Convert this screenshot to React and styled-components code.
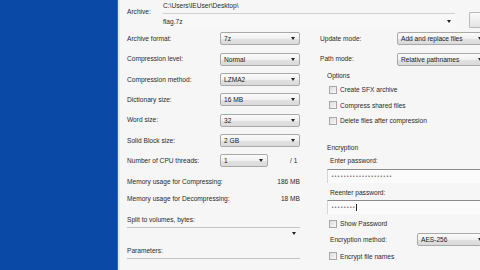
import React from "react";
import styled, { createGlobalStyle } from "styled-components";

const Global = createGlobalStyle`
  html, body { margin: 0; padding: 0; }
  body { width: 480px; height: 270px; overflow: hidden; background: #f6f6f6;
    font-family: "Liberation Sans", Arial, sans-serif; }
`;

const Screen = styled.div`
  display: flex;
  width: 480px;
  height: 270px;
  overflow: hidden;
`;

const BluePanel = styled.div`
  width: 117px;
  flex: none;
  background: #0b49a7;
  border-right: 1px solid #2f63b5;
`;

const Strip = styled.div`
  width: 2px;
  flex: none;
  background: #e4ebf4;
`;

const Dialog = styled.div`
  flex: 1;
  min-width: 0;
  background: #f6f6f6;
  padding-left: 7px;
  font-size: 6.6px;
  color: #2a2a2a;
  display: flex;
  flex-direction: column;
  overflow: hidden;
`;

const ArchiveRow = styled.div`
  height: 30px;
  display: grid;
  grid-template-columns: 36px 1fr;
`;

const Label = styled.div`
  white-space: nowrap;
  line-height: ${p => p.$h || 14}px;
  height: ${p => p.$h || 14}px;
  padding-left: ${p => p.$indent || 0}px;
`;

const PathBlock = styled.div`
  display: flex;
  flex-direction: column;
`;

const PathText = styled.div`
  height: 12px;
  line-height: 12px;
  white-space: nowrap;
`;

const ComboRow = styled.div`
  display: flex;
  align-items: stretch;
  gap: 14px;
  height: 15px;
  margin-top: 1px;
`;

const ComboField = styled.div`
  flex: 1;
  display: flex;
  align-items: center;
  justify-content: space-between;
  border-top: 1px solid #d0d0d0;
  padding: 0 4px 0 0;
  background: #f8f8f8;
`;

const SmallButton = styled.div`
  width: 10px;
  flex: none;
  border: 1px solid #b8b8b8;
  border-right: none;
  border-radius: 2px 0 0 2px;
  background: linear-gradient(#fafafa, #e4e4e4);
  margin-top: -1px;
`;

const Columns = styled.div`
  display: grid;
  grid-template-columns: 173px 1fr;
  column-gap: 20px;
`;

const Column = styled.div`
  display: flex;
  flex-direction: column;
  min-width: 0;
`;

const FormRow = styled.div`
  display: grid;
  grid-template-columns: ${p => p.$label}px ${p => p.$field}px auto;
  align-items: center;
  height: ${p => p.$h || 20.33}px;
`;

const SelectBox = styled.div`
  height: 13px;
  box-sizing: border-box;
  border: 1px solid #a9a9a9;
  border-radius: 2px;
  background: linear-gradient(#fbfbfb 0%, #f1f1f1 50%, #e2e2e2 51%, #dadada 100%);
  display: flex;
  align-items: center;
  justify-content: space-between;
  padding: 0 4px 0 3px;
  white-space: nowrap;
  overflow: hidden;
  color: #1a1a1a;
`;

const Arrow = styled.span`
  width: 0;
  height: 0;
  flex: none;
  border-left: 2.5px solid transparent;
  border-right: 2.5px solid transparent;
  border-top: 3px solid #222;
`;

const Suffix = styled.div`
  padding-left: 22px;
  white-space: nowrap;
`;

const MemRow = styled.div`
  display: flex;
  justify-content: space-between;
  align-items: center;
  height: 17px;
  width: 173px;
  white-space: nowrap;
`;

const LineField = styled.div`
  width: 173px;
  height: 12px;
  border-top: 1px solid #c4c4c4;
  display: flex;
  align-items: center;
  justify-content: flex-end;
  padding-right: 4px;
  box-sizing: border-box;
`;

const Legend = styled.div`
  padding-left: 7px;
  height: 10px;
  line-height: 10px;
  white-space: nowrap;
`;

const CheckRow = styled.div`
  display: flex;
  align-items: center;
  gap: 3px;
  height: ${p => p.$h || 15.5}px;
  padding-left: ${p => p.$indent || 9}px;
  white-space: nowrap;
`;

const Box = styled.span`
  width: 8px;
  height: 8px;
  flex: none;
  box-sizing: border-box;
  border: 1px solid #a8a8a8;
  background: linear-gradient(135deg, #dcdcdc, #f8f8f8);
`;

const PasswordField = styled.div`
  height: 14px;
  margin-left: 7px;
  box-sizing: border-box;
  border-top: 1px solid #8c8c8c;
  border-left: 1px solid #d6d6d6;
  background: #fbfbfb;
  display: flex;
  align-items: center;
  padding-left: 3px;
  font-family: "DejaVu Sans", sans-serif;
  font-size: 5px;
  letter-spacing: 0.1px;
  color: #555;
  white-space: nowrap;
`;

const Caret = styled.span`
  display: inline-block;
  width: 1px;
  height: 7px;
  background: #222;
  margin-left: 1px;
`;

const Spacer = styled.div`
  height: ${p => p.$h}px;
  flex: none;
`;

const leftRows = [
  ["Archive format:", "7z"],
  ["Compression level:", "Normal"],
  ["Compression method:", "LZMA2"],
  ["Dictionary size:", "16 MB"],
  ["Word size:", "32"],
  ["Solid Block size:", "2 GB"],
];

function Select({ value }) {
  return (
    <SelectBox>
      <span>{value}</span>
      <Arrow />
    </SelectBox>
  );
}

function Check({ label, h, indent }) {
  return (
    <CheckRow $h={h} $indent={indent}>
      <Box />
      <span>{label}</span>
    </CheckRow>
  );
}

export default function App() {
  return (
    <>
      <Global />
      <Screen>
        <BluePanel />
        <Strip />
        <Dialog>
          <ArchiveRow>
            <Label $h={24}>Archive:</Label>
            <PathBlock>
              <PathText>C:\Users\IEUser\Desktop\</PathText>
              <ComboRow>
                <ComboField>
                  <span>flag.7z</span>
                  <Arrow />
                </ComboField>
                <SmallButton />
              </ComboRow>
            </PathBlock>
          </ArchiveRow>
          <Columns>
            <Column>
              {leftRows.map(([l, v]) => (
                <FormRow key={l} $label={93} $field={80}>
                  <Label>{l}</Label>
                  <Select value={v} />
                </FormRow>
              ))}
              <FormRow $label={93} $field={48}>
                <Label>Number of CPU threads:</Label>
                <Select value="1" />
                <Suffix>/ 1</Suffix>
              </FormRow>
              <Spacer $h={2} />
              <MemRow>
                <span>Memory usage for Compressing:</span>
                <span>186 MB</span>
              </MemRow>
              <MemRow>
                <span>Memory usage for Decompressing:</span>
                <span>18 MB</span>
              </MemRow>
              <Spacer $h={6} />
              <Label>Split to volumes, bytes:</Label>
              <LineField>
                <Arrow />
              </LineField>
              <Spacer $h={5} />
              <Label>Parameters:</Label>
              <LineField />
            </Column>
            <Column>
              <FormRow $label={77} $field={90}>
                <Label>Update mode:</Label>
                <Select value="Add and replace files" />
              </FormRow>
              <FormRow $label={77} $field={90} $h={20}>
                <Label>Path mode:</Label>
                <Select value="Relative pathnames" />
              </FormRow>
              <Spacer $h={2} />
              <Legend>Options</Legend>
              <Spacer $h={1} />
              <Check label="Create SFX archive" />
              <Check label="Compress shared files" />
              <Check label="Delete files after compression" />
              <Spacer $h={14} />
              <Legend>Encryption</Legend>
              <Label $indent={10} $h={16}>Enter password:</Label>
              <PasswordField>••••••••••••••••••••</PasswordField>
              <Spacer $h={3} />
              <Label $indent={10} $h={14}>Reenter password:</Label>
              <PasswordField>
                ••••••••
                <Caret />
              </PasswordField>
              <Spacer $h={2} />
              <Check label="Show Password" h={16} />
              <FormRow $label={97} $field={70} $h={16}>
                <Label $indent={10}>Encryption method:</Label>
                <Select value="AES-256" />
              </FormRow>
              <Check label="Encrypt file names" h={17} />
            </Column>
          </Columns>
        </Dialog>
      </Screen>
    </>
  );
}
